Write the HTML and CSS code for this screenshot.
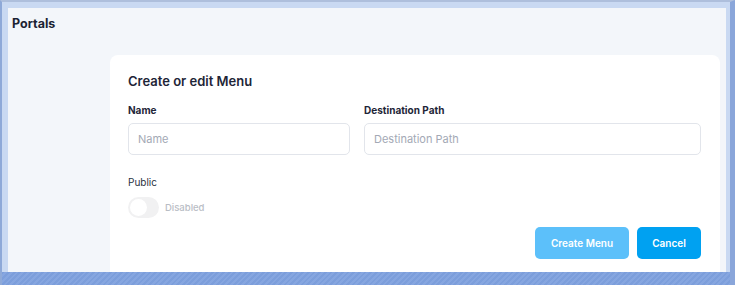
FILE: index.html
```html
<!DOCTYPE html>
<html lang="en">
<head>
    <meta charset="UTF-8">
    <title>Portals</title>
    <link rel="stylesheet" href="styles.css">
</head>
<body>

<div class="frame">
    <div class="screen">
        <h1 class="page-title">Portals</h1>

        <div class="card">
            <h2 class="card-title">Create or edit Menu</h2>

            <form class="menu-form" onsubmit="event.preventDefault()">
                <div class="row">
                    <div class="field field-name">
                        <label for="name">Name</label>
                        <input type="text" id="name" placeholder="Name">
                    </div>
                    <div class="field field-path">
                        <label for="path">Destination Path</label>
                        <input type="text" id="path" placeholder="Destination Path">
                    </div>
                </div>

                <div class="public">
                    <span class="public-label">Public</span>
                    <div class="switch-row">
                        <span class="switch"><span class="knob"></span></span>
                        <span class="switch-text">Disabled</span>
                    </div>
                </div>

                <div class="actions">
                    <button type="submit" class="btn btn-create">Create Menu</button>
                    <button type="button" class="btn btn-cancel">Cancel</button>
                </div>
            </form>
        </div>
    </div>
    <div class="taskbar"></div>
</div>

</body>
</html>
```

FILE: styles.css
```css
html, body {
    margin: 0;
    padding: 0;
}
body {
    font-family: Inter, 'Noto Sans', sans-serif;
    width: 735px;
    height: 285px;
    overflow: hidden;
}
.frame {
    box-sizing: border-box;
    width: 735px;
    height: 285px;
    background-color: #c9d9f2;
    border-top: 2px solid #aebfdc;
    border-left: 2px solid #8ea9d8;
    border-right: 5px solid #8aa6da;
    padding: 6px 4px 0 6px;
    display: flex;
    flex-direction: column;
}
.screen {
    flex: 1;
    background-color: #f3f6fa;
    padding: 6px 6px 0 4px;
    display: flex;
    flex-direction: column;
    overflow: hidden;
}
.taskbar {
    height: 13px;
    margin: 0 -4px 0 -6px;
    background: repeating-linear-gradient(135deg, #7c9edb 0 2px, #86a6e0 2px 4px);
}
.page-title {
    margin: 0;
    font-size: 12.5px;
    font-weight: 700;
    color: #1c2333;
    line-height: 20px;
}
.card {
    flex: 1;
    margin: 21px 0 0 98px;
    background: #fff;
    border-radius: 8px 8px 0 0;
    padding: 16px 19px 0 18px;
}
.card-title {
    margin: 0;
    font-size: 13px;
    font-weight: 600;
    color: #1e2537;
    line-height: 20px;
}
.row {
    display: flex;
    gap: 14px;
    margin-top: 13px;
}
.field {
    display: flex;
    flex-direction: column;
}
.field-name {
    width: 222px;
}
.field-path {
    flex: 1;
}
.field label {
    font-size: 10px;
    font-weight: 700;
    color: #1e2537;
    line-height: 12px;
    margin-bottom: 7px;
}
.field input {
    box-sizing: border-box;
    height: 32px;
    border: 1px solid #e2e5eb;
    border-radius: 5px;
    padding: 0 9px;
    font-family: inherit;
    font-size: 11px;
    color: #1e2537;
    outline: none;
}
.field input::placeholder {
    color: #a3a9b5;
}
.public {
    margin-top: 20px;
}
.public-label {
    display: block;
    font-size: 10px;
    color: #2a3142;
    line-height: 14px;
}
.switch-row {
    display: flex;
    align-items: center;
    gap: 6px;
    margin-top: 8px;
}
.switch {
    width: 31px;
    height: 21px;
    border-radius: 11px;
    background: #f1f1f2;
    display: flex;
    align-items: center;
    padding-left: 2px;
    box-sizing: border-box;
}
.knob {
    width: 17px;
    height: 17px;
    border-radius: 50%;
    background: #fff;
}
.switch-text {
    font-size: 9.5px;
    font-weight: 500;
    color: #b9bdc5;
}
.actions {
    display: flex;
    justify-content: flex-end;
    gap: 8px;
    margin-top: 9px;
}
.btn {
    height: 32px;
    border: none;
    border-radius: 5px;
    color: #fff;
    font-family: inherit;
    font-size: 10px;
    font-weight: 600;
    cursor: pointer;
}
.btn-create {
    width: 94px;
    background-color: #5cc0fa;
}
.btn-cancel {
    width: 64px;
    background-color: #00a1f1;
}
```
